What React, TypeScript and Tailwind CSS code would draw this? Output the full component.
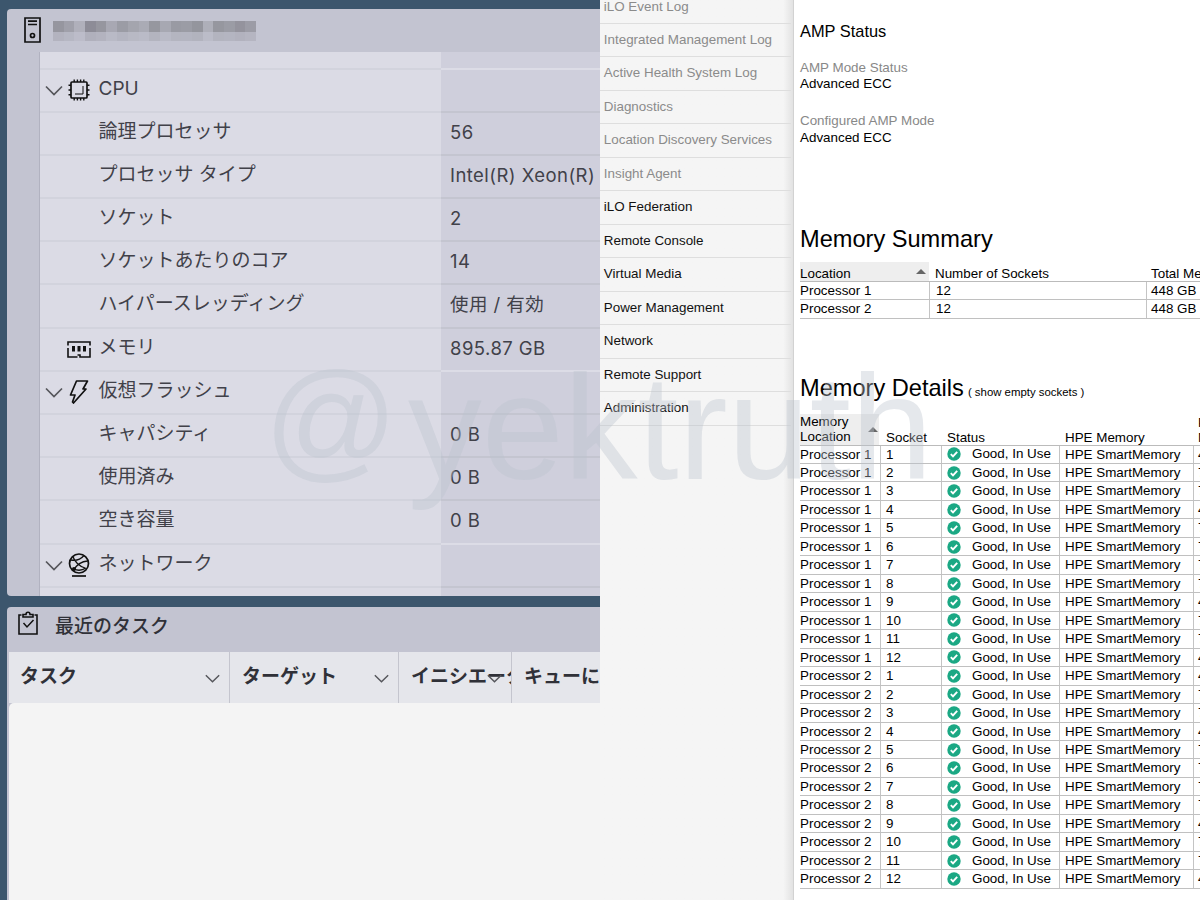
import { ReactNode } from "react";

const jp = "font-['Noto_Sans_CJK_JP','Noto_Sans',sans-serif]";
const mixed = "font-[Inter,'Noto_Sans_CJK_JP',sans-serif]";

function ServerIcon() {
  return (
    <svg className="w-[17px] h-[26px] shrink-0" viewBox="0 0 17 26" fill="none" stroke="#111" strokeWidth="1.7">
      <path d="M1 1h15v24H1zM4 4.2h9M4 7.5h9" />
      <circle cx="8.5" cy="18.5" r="2" />
    </svg>
  );
}

function CpuIcon() {
  return (
    <svg className="w-[22px] h-[22px] shrink-0" viewBox="0 0 22 22" fill="none" stroke="#111" strokeWidth="1.7">
      <rect x="3" y="3" width="16" height="16" rx="1" />
      <path
        d="M6.2 0.5V3M9.4 0.5V3M12.6 0.5V3M15.8 0.5V3M6.2 19v2.5M9.4 19v2.5M12.6 19v2.5M15.8 19v2.5M0.5 6.2h2.5M0.5 11h2.5M0.5 15.8h2.5M19 6.2h2.5M19 11h2.5M19 15.8h2.5"
        strokeWidth="1.4"
      />
      <path d="M15 7v8H7" strokeWidth="1" />
    </svg>
  );
}

function MemoryIcon() {
  return (
    <svg className="w-6 h-[17px] shrink-0" viewBox="0 0 24 17" fill="none" stroke="#111" strokeWidth="1.6">
      <path d="M1 4.500V1h22v3.500M1 7v9h9.500M23 7v9H13v-2h-2.500" />
      <path d="M6.500 5v5.500M12 5v5.500M17.500 5v5.500" strokeWidth="3" />
    </svg>
  );
}

function FlashIcon() {
  return (
    <svg className="w-[20px] h-6 shrink-0" viewBox="0 0 20 24" fill="none" stroke="#111" strokeWidth="1.7" strokeLinejoin="round">
      <path d="M7.500 1h11l-4.500 8h3L4.500 23l-1-1 2.500-7H1.500z" />
    </svg>
  );
}

function NetworkIcon() {
  return (
    <svg className="w-[22px] h-6 shrink-0" viewBox="0 0 22 24" fill="none" stroke="#111" strokeWidth="1.7">
      <circle cx="11" cy="10.500" r="9.500" />
      <path d="M5 3.500C6 8 11 13 17 15M3 7c5 1 10-1 13-4.500M19.500 8C14 8 8 12 6 17M6 16c4 2 8 1.500 12-1" strokeWidth="1.3" />
      <path d="M4 23h14" />
      <circle cx="6" cy="16" r="1.200" fill="#111" />
    </svg>
  );
}

function ClipboardIcon() {
  return (
    <svg className="w-5 h-6" viewBox="0 0 20 24" fill="none" stroke="#111" strokeWidth="1.6">
      <path d="M3.500 4H1v19h18V4h-2.500" />
      <path d="M5 6V3.500h3C8 0.500 12 0.500 12 3.500h3V6z" />
      <path d="M5.500 12l3.500 4 6.500-7" strokeWidth="1.5" />
    </svg>
  );
}

function Chevron({ className = "w-[18px]" }: { className?: string }) {
  return (
    <svg className={`${className} h-[11px]`} viewBox="0 0 18 11" fill="none" stroke="#55565b" strokeWidth="1.700">
      <path d="M1 1.500l8 8 8-8" />
    </svg>
  );
}

function CheckIcon() {
  return (
    <svg className="w-[14px] h-[14px] shrink-0" viewBox="0 0 14 14" fill="none">
      <circle cx="7" cy="7" r="6.700" fill="#1ba884" />
      <path d="M3.800 7.200l2.200 2.200 4.200-4.500" stroke="#fff" strokeWidth="1.9" />
    </svg>
  );
}

type Row = {
  label: string;
  value?: string;
  icon?: ReactNode;
  open?: boolean;
};

const rows: Row[] = [
  { label: "CPU", icon: <CpuIcon />, open: true },
  { label: "論理プロセッサ", value: "56" },
  { label: "プロセッサ タイプ", value: "Intel(R) Xeon(R)" },
  { label: "ソケット", value: "2" },
  { label: "ソケットあたりのコア", value: "14" },
  { label: "ハイパースレッディング", value: "使用 / 有効" },
  { label: "メモリ", value: "895.87 GB", icon: <MemoryIcon /> },
  { label: "仮想フラッシュ", icon: <FlashIcon />, open: true },
  { label: "キャパシティ", value: "0 B" },
  { label: "使用済み", value: "0 B" },
  { label: "空き容量", value: "0 B" },
  { label: "ネットワーク", icon: <NetworkIcon />, open: true },
];

const mosaic = [
  "bg-[#96969f]", "bg-[#a0a0aa]", "bg-[#b0b0bb]", "bg-[#8d8c97]", "bg-[#96969f]", "bg-[#a8a8b3]", "bg-[#9b9ca5]",
  "bg-[#a4a5ae]", "bg-[#aaabb5]", "bg-[#96979f]", "bg-[#a7a8b2]", "bg-[#999aa3]", "bg-[#9b9ca5]", "bg-[#94959d]",
  "bg-[#aeafb9]", "bg-[#96979f]", "bg-[#9b9ca5]", "bg-[#94939d]", "bg-[#9c9ca6]",
];

function HardwareRow({ row }: { row: Row }) {
  return (
    <div className="flex h-[43.200px] shrink-0">
      <div className="flex w-[401px] border-t-2 border-[#d2d3dd] bg-[#dbdbe5]">
        <div className="flex w-7 justify-center pt-[15px]">{row.open && <Chevron />}</div>
        <div className="flex w-[22px] items-center justify-center">{row.icon}</div>
        <div className={`${mixed} h-[38px] pl-[8.500px] text-[19px] leading-[38px] whitespace-nowrap text-[#414149]`}>
          {row.label}
        </div>
      </div>
      <div
        className={`${mixed} flex-1 overflow-hidden border-t-2 ${row.open ? "border-[#dcdce6]" : "border-[#c4c5d0]"} bg-[#cfcfdc] pl-[9px] text-[18.500px] leading-[38px] tracking-[0.450px] whitespace-nowrap text-[#414149]`}
      >
        {row.value}
      </div>
    </div>
  );
}

function VsphereScreen() {
  return (
    <div className="flex h-[900px] w-[600px] shrink-0 flex-col overflow-hidden bg-[#3c566d] pt-[9px] pl-[7px]">
      <div className="flex h-[587px] shrink-0 flex-col overflow-hidden rounded-l-[4px] bg-[#c3c4d1]">
        <div className="flex h-[43px] shrink-0 pt-[8px] pl-[17px]">
          <ServerIcon />
          <div className="ml-3 mt-[4px] w-[203px]">
            <div className="flex h-[11px]">
              {mosaic.map((c, i) => (
                <div key={i} className={`flex-1 ${c}`} />
              ))}
            </div>
            <div className="flex h-[9px] opacity-35">
              {mosaic.map((c, i) => (
                <div key={i} className={`flex-1 ${c}`} />
              ))}
            </div>
          </div>
        </div>
        <div className="ml-8 flex flex-1 flex-col overflow-hidden border-l border-[#b1b2c0]">
          <div className="flex h-[15.500px] shrink-0">
            <div className="w-[401px] bg-[#dbdbe5]" />
            <div className="flex-1 bg-[#cfcfdc]" />
          </div>
          {rows.map((row) => (
            <HardwareRow key={row.label} row={row} />
          ))}
          <div className="flex flex-1">
            <div className="w-[401px] border-t-2 border-[#d2d3dd] bg-[#dbdbe5]" />
            <div className="flex-1 border-t-2 border-[#c4c5d0] bg-[#cfcfdc]" />
          </div>
        </div>
      </div>
      <div className="mt-[11px] flex flex-1 flex-col overflow-hidden rounded-tl-[4px] bg-[#c3c4d1]">
        <div className="flex h-[45px] shrink-0 pt-[4px] pl-[11px]">
          <ClipboardIcon />
          <h2 className={`${jp} ml-[17px] text-[19px] leading-[28px] font-medium text-[#303138]`}>最近のタスク</h2>
        </div>
        <div className={`${jp} ml-[2px] flex h-[51px] shrink-0 bg-[#e5e6eb] text-[19px] leading-[45px] font-bold whitespace-nowrap text-[#303138]`}>
          <div className="flex w-[221px] items-start justify-between border-r border-[#c4c5ce] pl-[11px] pr-[9px]">
            タスク
            <Chevron className="mt-[21px] w-[15px]" />
          </div>
          <div className="flex w-[169px] items-start justify-between border-r border-[#c4c5ce] pl-3 pr-[9px]">
            ターゲット
            <Chevron className="mt-[21px] w-[15px]" />
          </div>
          <div className="relative w-[113px] overflow-hidden border-r border-[#c4c5ce] pl-3">
            イニシエータ
            <Chevron className="absolute top-[21px] right-[9px] w-[15px]" />
          </div>
          <div className="flex-1 overflow-hidden pl-3">キューに</div>
        </div>
        <div className="ml-[2px] flex-1 rounded-tl-[5px] bg-[#f4f4f4]" />
      </div>
    </div>
  );
}

const menu = [
  { label: "iLO Event Log", sub: true },
  { label: "Integrated Management Log", sub: true },
  { label: "Active Health System Log", sub: true },
  { label: "Diagnostics", sub: true },
  { label: "Location Discovery Services", sub: true },
  { label: "Insight Agent", sub: true },
  { label: "iLO Federation" },
  { label: "Remote Console" },
  { label: "Virtual Media" },
  { label: "Power Management" },
  { label: "Network" },
  { label: "Remote Support" },
  { label: "Administration" },
];

function SideMenu() {
  return (
    <nav className="h-[900px] w-[194px] shrink-0 overflow-hidden border-r border-[#d2d2d2] bg-linear-to-r from-[#f5f5f5] from-95% to-[#e2e2e2]">
      <div className="-mt-[9.500px] w-[191px]">
        {menu.map((m) => (
          <div
            key={m.label}
            className={`h-[33.480px] border-b border-[#dedede] pl-[3.800px] text-[13.400px] leading-[32.800px] whitespace-nowrap ${m.sub ? "text-[#8b8b8b]" : "text-[#111]"}`}
          >
            {m.label}
          </div>
        ))}
      </div>
    </nav>
  );
}

function SortArrow() {
  return (
    <svg className="w-[10px] h-[5px]" viewBox="0 0 10 5">
      <path d="M0 5l5-5 5 5z" fill="#666" />
    </svg>
  );
}

const modules = [1, 2].flatMap((cpu) =>
  Array.from({ length: 12 }, (_, i) => ({
    cpu,
    socket: i + 1,
    part: [1, 4, 9, 12].includes(i + 1) ? "4" : "7",
  })),
);

function IloScreen() {
  return (
    <div className="flex h-[900px] flex-1 overflow-hidden bg-white font-['Liberation_Sans',Arial,sans-serif] text-black">
      <SideMenu />
      <main className="flex w-[406px] shrink-0 flex-col overflow-hidden pl-[6px] text-[13.400px]">
        <h3 className="mt-[20px] h-[22px] text-[16.400px] leading-[22px]">AMP Status</h3>
        <dl className="mt-[17.500px] leading-[16.500px]">
          <dt className="text-[#888]">AMP Mode Status</dt>
          <dd>Advanced ECC</dd>
          <dt className="mt-[20.500px] text-[#888]">Configured AMP Mode</dt>
          <dd>Advanced ECC</dd>
        </dl>
        <h1 className="mt-[76.500px] h-[32px] text-[23.600px] leading-[32px] whitespace-nowrap">Memory Summary</h1>
        <div className="mt-[7px] w-[500px]">
          <div className="flex h-[20px] border-b border-[#bbb] leading-[24px]">
            <div className="flex w-[129px] justify-between bg-[#eee] pr-[3px]">
              Location
              <div className="pt-[7px] leading-none">
                <SortArrow />
              </div>
            </div>
            <div className="w-[216px] pl-[6px]">Number of Sockets</div>
            <div className="pl-[6px]">Total Memory</div>
          </div>
          {[1, 2].map((cpu) => (
            <div key={cpu} className="flex h-[18.500px] border-b border-[#c0c0c0] leading-[18px]">
              <div className="w-[130px] border-r border-[#c4c4c4]">Processor {cpu}</div>
              <div className="w-[217px] border-r border-[#c4c4c4] pl-[6px]">12</div>
              <div className="pl-1">448 GB</div>
            </div>
          ))}
        </div>
        <h1 className="mt-[53px] h-[32px] text-[23.600px] leading-[32px] whitespace-nowrap">
          Memory Details<span className="ml-1 text-[11.400px]">( show empty sockets )</span>
        </h1>
        <div className="mt-[10px] w-[500px] whitespace-nowrap">
          <div className="flex h-[32px] items-end border-b border-[#bbb] leading-[15px]">
            <div className="flex h-[31px] w-[79px] items-center justify-between bg-[#eee] pr-[1px]">
              <span className="w-[60px] whitespace-normal">Memory Location</span>
              <SortArrow />
            </div>
            <div className="w-[61px] pl-[7px]">Socket</div>
            <div className="w-[118px] pl-[7px]">Status</div>
            <div className="w-[134px] pl-[7px]">HPE Memory</div>
            <div className="pl-[6px]">
              Part
              <br />
              Number
            </div>
          </div>
          {modules.map((m) => (
            <div key={`${m.cpu}-${m.socket}`} className="flex h-[18.480px] border-b border-[#c0c0c0] leading-[17.500px]">
              <div className="w-[81px] border-r border-[#c4c4c4]">Processor {m.cpu}</div>
              <div className="w-[61px] border-r border-[#c4c4c4] pl-[5px]">{m.socket}</div>
              <div className="flex w-[118px] items-center border-r border-[#c4c4c4] pl-[5px]">
                <CheckIcon />
                <span className="ml-[11px]">Good, In Use</span>
              </div>
              <div className="w-[134px] border-r border-[#c4c4c4] pl-[5px]">HPE SmartMemory</div>
              <div className="pl-[4px]">{m.part}</div>
            </div>
          ))}
        </div>
      </main>
    </div>
  );
}

// Translucent handle laid over both screens
function Watermark() {
  return (
    <div className="pointer-events-none absolute top-[349px] left-[264px] flex font-['Liberation_Sans',Arial,sans-serif] whitespace-nowrap text-[#bbc3cc]/38">
      <span className="w-[144px] text-[132px] leading-[142px]">@</span>
      <span className="text-[147.500px] leading-[158px]">yektruth</span>
    </div>
  );
}

export default function App() {
  return (
    <div className="relative flex h-[900px] w-[1200px] overflow-hidden">
      <VsphereScreen />
      <IloScreen />
      <Watermark />
    </div>
  );
}
